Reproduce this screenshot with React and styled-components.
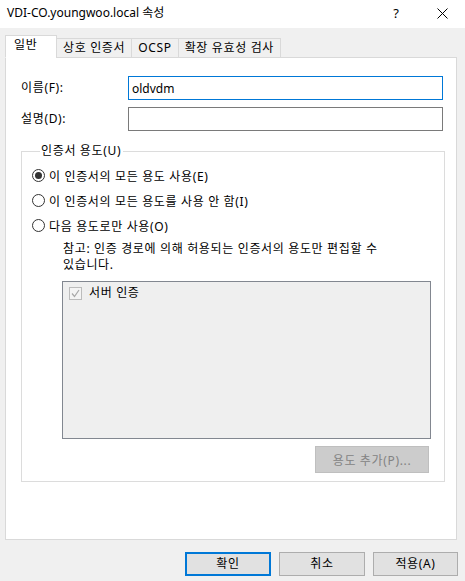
import React from 'react'
import styled, { createGlobalStyle } from 'styled-components'

const GlobalStyle = createGlobalStyle`
    html, body {
        margin: 0;
        padding: 0;
        background: #f0f0f0;
    }
    body {
        font-family: "Noto Sans", "Noto Sans CJK KR", sans-serif;
        font-size: 12px;
        color: #000;
    }
`;

const tabs = ['일반', '상호 인증서', 'OCSP', '확장 유효성 검사'];

const usages = [
    { label: '이 인증서의 모든 용도 사용(E)', checked: true },
    { label: '이 인증서의 모든 용도를 사용 안 함(I)', checked: false },
    { label: '다음 용도로만 사용(O)', checked: false },
];

const App = () => {
    return (
        <Window>
            <GlobalStyle />
            <TitleBar>
                <Title>VDI-CO.youngwoo.local 속성</Title>
                <TitleButton>?</TitleButton>
                <TitleButton>
                    <svg width="11" height="11" viewBox="0 0 11 11">
                        <path d="M0.5 0.5 L10.5 10.5 M10.5 0.5 L0.5 10.5" stroke="#000" strokeWidth="1" />
                    </svg>
                </TitleButton>
            </TitleBar>

            <TabStrip>
                {tabs.map((t, i) => (
                    <Tab key={t} active={i === 0}>{t}</Tab>
                ))}
            </TabStrip>

            <Panel>
                <FieldRow>
                    <Label>이름(F):</Label>
                    <TextInput focused defaultValue="oldvdm" />
                </FieldRow>
                <FieldRow>
                    <Label>설명(D):</Label>
                    <TextInput defaultValue="" />
                </FieldRow>

                <GroupBox>
                    <Legend>인증서 용도(U)</Legend>
                    {usages.map(u => (
                        <RadioRow key={u.label}>
                            <Radio checked={u.checked} />
                            <span>{u.label}</span>
                        </RadioRow>
                    ))}
                    <Indented>
                        <Note>
                            참고: 인증 경로에 의해 허용되는 인증서의 용도만 편집할 수<br />
                            있습니다.
                        </Note>
                        <PurposeList>
                            <ListItem>
                                <CheckBox>
                                    <svg width="9" height="9" viewBox="0 0 9 9">
                                        <path d="M1 4.5 L3.5 7.5 L8 1" fill="none" stroke="#a8a8a8" strokeWidth="1.2" />
                                    </svg>
                                </CheckBox>
                                <span>서버 인증</span>
                            </ListItem>
                        </PurposeList>
                        <ListActions>
                            <DisabledButton>용도 추가(P)...</DisabledButton>
                        </ListActions>
                    </Indented>
                </GroupBox>
            </Panel>

            <ButtonBar>
                <DialogButton primary>확인</DialogButton>
                <DialogButton>취소</DialogButton>
                <DialogButton narrow>적용(A)</DialogButton>
            </ButtonBar>
        </Window>
    )
}

const Window = styled.div`
    width: 465px;
    height: 581px;
    background: #f0f0f0;
    display: flex;
    flex-direction: column;
    overflow: hidden;
    letter-spacing: 0.65px;
`;

const TitleBar = styled.div`
    height: 28px;
    background: #fff;
    display: flex;
    align-items: center;
    padding-left: 7px;
    letter-spacing: 0;
`;

const Title = styled.div`
    flex: 1;
    line-height: 16px;
    margin-top: -2px;
`;

const TitleButton = styled.div`
    width: 46px;
    height: 28px;
    display: flex;
    align-items: center;
    justify-content: center;
    font-size: 13px;
    margin-top: -2px;
`;

const TabStrip = styled.div`
    display: flex;
    align-items: flex-end;
    height: 30px;
    padding-left: 5px;
    margin-bottom: -1px;
    position: relative;
    z-index: 1;
`;

const Tab = styled.div`
    height: ${p => p.active ? '23px' : '20px'};
    width: ${p => p.active ? '52px' : 'auto'};
    padding: 0 ${p => p.active ? '8px' : '6px'};
    display: flex;
    align-items: center;
    background: ${p => p.active ? '#fff' : '#f0f0f0'};
    border: 1px solid #d9d9d9;
    border-bottom: ${p => p.active ? '1px solid #fff' : '1px solid #d9d9d9'};
    margin-left: -1px;
    line-height: 16px;
    padding-bottom: ${p => p.active ? '3px' : '0'};
    box-sizing: border-box;
    &:first-child { margin-left: 0; }
`;

const Panel = styled.div`
    margin-left: 5px;
    width: 452px;
    height: 483px;
    box-sizing: border-box;
    background: #fff;
    border: 1px solid #d9d9d9;
    padding: 18px 11px 0 15px;
`;

const FieldRow = styled.div`
    display: flex;
    align-items: center;
    margin-bottom: 7px;
`;

const Label = styled.div`
    width: 107px;
    line-height: 16px;
`;

const TextInput = styled.input`
    width: 315px;
    height: 24px;
    box-sizing: border-box;
    border: 1px solid ${p => p.focused ? '#0078d7' : '#7a7a7a'};
    outline: none;
    padding: 0 3px;
    font-family: inherit;
    font-size: 12px;
    letter-spacing: 0;
    color: #000;
    background: #fff;
`;

const GroupBox = styled.fieldset`
    margin: 12px 0 0 0;
    padding: 0 0 8px 10px;
    border: 1px solid #dcdcdc;
    box-sizing: border-box;
`;

const Legend = styled.legend`
    margin-left: 8px;
    padding: 0 2px 0 1px;
    line-height: 16px;
`;

const RadioRow = styled.div`
    display: flex;
    align-items: center;
    height: 25px;
    gap: 4px;
    &:first-of-type { margin-top: 4px; }
`;

const Radio = styled.span`
    width: 13px;
    height: 13px;
    flex-shrink: 0;
    box-sizing: border-box;
    border: 1px solid #333;
    border-radius: 50%;
    display: flex;
    align-items: center;
    justify-content: center;
    &::after {
        content: '';
        display: ${p => p.checked ? 'block' : 'none'};
        width: 7px;
        height: 7px;
        border-radius: 50%;
        background: #333;
    }
`;

const Indented = styled.div`
    margin: 0 13px 0 30px;
`;

const Note = styled.div`
    line-height: 16px;
    margin: 3px 0 8px 1px;
`;

const PurposeList = styled.div`
    height: 158px;
    box-sizing: border-box;
    border: 1px solid #828790;
    background: #efefef;
    padding: 3px 6px;
`;

const ListItem = styled.div`
    display: flex;
    align-items: center;
    gap: 7px;
    line-height: 16px;
`;

const CheckBox = styled.span`
    width: 13px;
    height: 13px;
    box-sizing: border-box;
    border: 1px solid #bcbcbc;
    background: #f4f4f4;
    display: flex;
    align-items: center;
    justify-content: center;
`;

const ListActions = styled.div`
    display: flex;
    justify-content: flex-end;
    padding-top: 7px;
    padding-right: 2px;
`;

const DisabledButton = styled.div`
    width: 114px;
    height: 27px;
    box-sizing: border-box;
    background: #cccccc;
    border: 1px solid #bfbfbf;
    color: #838383;
    display: flex;
    align-items: center;
    justify-content: center;
`;

const ButtonBar = styled.div`
    display: flex;
    justify-content: flex-end;
    gap: 8px;
    padding: 12px 7px 0 0;
`;

const DialogButton = styled.div`
    width: ${p => p.narrow ? '85px' : '86px'};
    height: 24px;
    box-sizing: border-box;
    background: #e1e1e1;
    border: ${p => p.primary ? '2px solid #0078d7' : '1px solid #adadad'};
    display: flex;
    align-items: center;
    justify-content: center;
    line-height: 16px;
`;

export default App
